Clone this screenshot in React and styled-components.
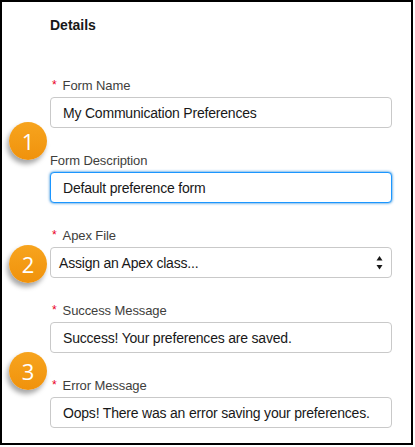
import React from "react";
import styled, { createGlobalStyle, css } from "styled-components";

const GlobalStyle = createGlobalStyle`
  html, body {
    margin: 0;
    padding: 0;
    background: #ffffff;
  }
  body {
    font-family: "Liberation Sans", Arial, sans-serif;
    -webkit-font-smoothing: antialiased;
  }
`;

const fields = [
  { label: "Form Name", required: true, value: "My Communication Preferences" },
  { label: "Form Description", value: "Default preference form", focused: true },
  { label: "Apex File", required: true, value: "Assign an Apex class...", select: true },
  { label: "Success Message", required: true, value: "Success! Your preferences are saved." },
  { label: "Error Message", required: true, value: "Oops! There was an error saving your preferences." },
];

const steps = [
  { n: 1, top: 120 },
  { n: 2, top: 243 },
  { n: 3, top: 350 },
];

const App = () => {
  return (
    <>
      <GlobalStyle />
      <Panel>
        <Heading>Details</Heading>
        <Form>
          {fields.map((f) => (
            <Field key={f.label}>
              <Label>
                {f.required && <Required>*</Required>}
                {f.label}
              </Label>
              {f.select ? (
                <Select>
                  <span>{f.value}</span>
                  <Arrows>
                    <svg width="7" height="16" viewBox="0 0 7 16">
                      <path d="M3.5 1 L6.5 5.5 L0.5 5.5 Z" fill="#181818" />
                      <path d="M3.5 14.5 L6.5 10 L0.5 10 Z" fill="#181818" />
                    </svg>
                  </Arrows>
                </Select>
              ) : (
                <Input $focused={f.focused}>{f.value}</Input>
              )}
            </Field>
          ))}
        </Form>
        {steps.map((s) => (
          <Step key={s.n} style={{ top: s.top }}>
            {s.n}
          </Step>
        ))}
      </Panel>
    </>
  );
};

const Panel = styled.div`
  position: relative;
  box-sizing: border-box;
  width: 413px;
  height: 445px;
  border: 2px solid #000000;
  padding: 14px 19px 0 48px;
  background: #ffffff;
`;

const Heading = styled.h2`
  margin: 0;
  font-size: 14px;
  line-height: 18px;
  font-weight: 700;
  color: #181818;
`;

const Form = styled.div`
  display: flex;
  flex-direction: column;
  gap: 23px;
  margin-top: 42px;
`;

const Field = styled.div`
  display: flex;
  flex-direction: column;
`;

const Label = styled.label`
  display: flex;
  align-items: center;
  height: 18px;
  margin-bottom: 3px;
  font-size: 13px;
  letter-spacing: -0.1px;
  color: #3e3e3c;
`;

const Required = styled.span`
  color: #ea001e;
  font-size: 12px;
  margin: 0 6px 0 2px;
`;

const boxBase = css`
  box-sizing: border-box;
  display: flex;
  align-items: center;
  height: 31px;
  border-radius: 4px;
  font-size: 14px;
  letter-spacing: -0.2px;
  color: #181818;
  background: #ffffff;
  white-space: nowrap;
`;

const Input = styled.div`
  ${boxBase};
  padding: 0 12px;
  border: 1px solid ${(p) => (p.$focused ? "#1b96ff" : "#c9c9c9")};
  box-shadow: ${(p) => (p.$focused ? "0 0 3px #0176d3" : "none")};
`;

const Select = styled.div`
  ${boxBase};
  justify-content: space-between;
  padding: 0 8px;
  border: 1px solid #c9c9c9;
`;

const Arrows = styled.span`
  display: flex;
  align-items: center;
`;

const Step = styled.div`
  position: absolute;
  left: 7px;
  width: 38px;
  height: 38px;
  border-radius: 50%;
  display: flex;
  align-items: center;
  justify-content: center;
  background: linear-gradient(180deg, #f7a41e 0%, #f0920c 100%);
  box-shadow: -2px 4px 5px rgba(0, 0, 0, 0.35);
  color: #ffffff;
  font-family: "Open Sans", "Liberation Sans", sans-serif;
  font-size: 22px;
  line-height: 1;
`;

export default App;
